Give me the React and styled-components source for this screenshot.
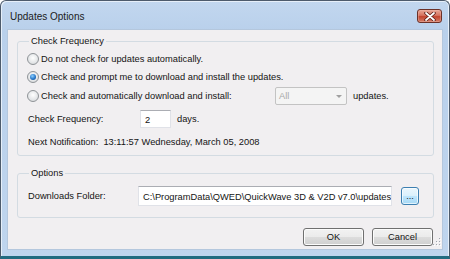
import React from "react";
import styled, { createGlobalStyle } from "styled-components";

const GlobalStyle = createGlobalStyle`
    body{
        margin:0;
        background:#fff;
        font-family:'Liberation Sans', Arial, sans-serif;
    }
`;

export default function App() {
    return (
        <>
            <GlobalStyle />
            <Janela>
                <BarraTitulo>
                    <Titulo>Updates Options</Titulo>
                    <BotaoFechar>
                        <svg width="12" height="9" viewBox="0 0 12 9">
                            <path d="M2 1 L10 8 M10 1 L2 8" stroke="#5a1c16" strokeWidth="3.4" strokeLinecap="round" />
                            <path d="M2 1 L10 8 M10 1 L2 8" stroke="#fff" strokeWidth="1.8" strokeLinecap="round" />
                        </svg>
                    </BotaoFechar>
                </BarraTitulo>
                <Conteudo>
                    <Grupo>
                        <Legenda>Check Frequency</Legenda>
                        <Linha $altura={18}>
                            <Radio />
                            <Texto>Do not check for updates automatically.</Texto>
                        </Linha>
                        <Linha $altura={18}>
                            <Radio $marcado />
                            <Texto>Check and prompt me to download and install the updates.</Texto>
                        </Linha>
                        <Linha $altura={20}>
                            <OpcaoLarga>
                                <Radio />
                                <Texto>Check and automatically download and install:</Texto>
                            </OpcaoLarga>
                            <Combo>
                                <span>All</span>
                                <Seta />
                            </Combo>
                            <Texto>updates.</Texto>
                        </Linha>
                        <Linha $altura={18} $topo={4} $recuo={1}>
                            <Rotulo $largura={112}>Check Frequency:</Rotulo>
                            <CampoTexto $largura={31} $altura={18}>2</CampoTexto>
                            <Texto>days.</Texto>
                        </Linha>
                        <Linha $altura={18} $topo={5} $recuo={1}>
                            <Texto>Next Notification:&nbsp; 13:11:57 Wednesday, March 05, 2008</Texto>
                        </Linha>
                    </Grupo>
                    <Grupo $topo={11} $baixo={11}>
                        <Legenda>Options</Legenda>
                        <Linha $altura={20} $topo={4} $recuo={1}>
                            <Rotulo $largura={110}>Downloads Folder:</Rotulo>
                            <CampoTexto $largura={254} $altura={20}>C:\ProgramData\QWED\QuickWave 3D &amp; V2D v7.0\updates</CampoTexto>
                            <BotaoProcurar>...</BotaoProcurar>
                        </Linha>
                    </Grupo>
                    <Rodape>
                        <Botao>OK</Botao>
                        <Botao>Cancel</Botao>
                    </Rodape>
                    <Alca>
                        <svg width="8" height="8" viewBox="0 0 8 8">
                            {[[6, 0], [3, 3], [6, 3], [0, 6], [3, 6], [6, 6]].map(([x, y]) => (
                                <g key={`${x}-${y}`}>
                                    <rect x={x + 1} y={y + 1} width="1" height="1" fill="#fff" />
                                    <rect x={x} y={y} width="1" height="1" fill="#a0a6ad" />
                                </g>
                            ))}
                        </svg>
                    </Alca>
                </Conteudo>
            </Janela>
        </>
    );
}

const Janela = styled.div`
    width:450px;
    height:259px;
    box-sizing:border-box;
    display:flex;
    flex-direction:column;
    padding:0 6px 6px 6px;
    border:1px solid #4d5b6c;
    border-bottom:3px solid #216b80;
    border-radius:6px 6px 0 0;
    background:linear-gradient(#c2d7ef, #b9d0eb 30px, #bfd5ee);
    box-shadow:inset 1px 1px 0 #e6eff9, inset -1px 0 0 #e6eff9;
`;

const BarraTitulo = styled.div`
    height:28px;
    display:flex;
    align-items:center;
    justify-content:space-between;
    padding-left:3px;
    padding-right:1px;
`;

const Titulo = styled.span`
    font-size:10px;
    color:#1b1b1b;
    margin-top:2px;
`;

const BotaoFechar = styled.div`
    width:25px;
    height:14px;
    box-sizing:border-box;
    margin-top:2px;
    border:1px solid #6b3128;
    border-radius:3px;
    background:linear-gradient(#e9a898, #d6735f 45%, #c2442e 55%, #d47e68);
    box-shadow:inset 0 0 0 1px #f0b9ad66;
    display:flex;
    align-items:center;
    justify-content:center;
`;

const Conteudo = styled.div`
    flex:1;
    position:relative;
    display:flex;
    flex-direction:column;
    background:#f1eff1;
    border:1px solid #b4c7dd;
    padding:5px 8px 0 9px;
    font-size:9.3px;
    color:#141414;
`;

const Grupo = styled.fieldset`
    margin:${p => p.$topo || 0}px 0 0 0;
    padding:3px 0 ${p => p.$baixo || 4}px 9px;
    border:1px solid #d3dbe2;
    border-radius:3px;
    min-width:0;
`;

const Legenda = styled.legend`
    padding:0 2px;
    margin-left:2px;
    font-size:9.3px;
    line-height:12px;
    color:#141414;
`;

const Linha = styled.div`
    height:${p => p.$altura}px;
    margin-top:${p => p.$topo || 0}px;
    padding-left:${p => p.$recuo || 0}px;
    display:flex;
    align-items:center;
`;

const OpcaoLarga = styled.div`
    width:248px;
    display:flex;
    align-items:center;
`;

const Radio = styled.span`
    width:12px;
    height:12px;
    box-sizing:border-box;
    border-radius:50%;
    border:1px solid #8f9397;
    background:radial-gradient(circle at 50% 40%, #ffffff, #e4e6e8 60%, #cfd2d5);
    display:flex;
    align-items:center;
    justify-content:center;
    margin-right:2px;
    flex-shrink:0;
    &::after{
        content:'';
        display:${p => (p.$marcado ? "block" : "none")};
        width:6px;
        height:6px;
        border-radius:50%;
        background:radial-gradient(circle at 40% 35%, #8fd0ff, #2677c9 55%, #0f3f7c);
    }
`;

const Texto = styled.span`
    white-space:nowrap;
    line-height:12px;
`;

const Rotulo = styled.span`
    width:${p => p.$largura}px;
    flex-shrink:0;
    white-space:nowrap;
`;

const Combo = styled.div`
    width:72px;
    height:18px;
    box-sizing:border-box;
    border:1px solid #c3c3c3;
    border-radius:2px;
    background:#f4f4f4;
    color:#a8a8a8;
    display:flex;
    align-items:center;
    justify-content:space-between;
    padding:0 4px 0 3px;
    margin-right:6px;
`;

const Seta = styled.span`
    width:0;
    height:0;
    border-left:3px solid transparent;
    border-right:3px solid transparent;
    border-top:3px solid #a0a0a0;
`;

const CampoTexto = styled.div`
    width:${p => p.$largura}px;
    height:${p => p.$altura}px;
    box-sizing:border-box;
    flex-shrink:0;
    border:1px solid #e0e2e8;
    border-top-color:#abadb3;
    background:#fff;
    padding:1px 4px 0 4px;
    display:flex;
    align-items:center;
    white-space:nowrap;
    overflow:hidden;
    margin-right:6px;
`;

const BotaoProcurar = styled.div`
    width:18px;
    height:18px;
    box-sizing:border-box;
    margin-left:3px;
    border:1px solid #3c7fb1;
    border-radius:3px;
    background:linear-gradient(#eaf6fd, #d9f0fc 50%, #bee6fd 50%, #a7d9f5);
    box-shadow:inset 0 0 0 1px #ffffffaa;
    display:flex;
    align-items:center;
    justify-content:center;
    font-size:9px;
    line-height:8px;
`;

const Rodape = styled.div`
    display:flex;
    justify-content:flex-end;
    gap:8px;
    margin-top:10px;
    padding-right:1px;
`;

const Botao = styled.div`
    width:61px;
    height:18px;
    box-sizing:border-box;
    border:1px solid #707070;
    border-radius:3px;
    background:linear-gradient(#f2f2f2, #ebebeb 50%, #dddddd 50%, #cfcfcf);
    box-shadow:inset 0 0 0 1px #fcfcfc;
    display:flex;
    align-items:center;
    justify-content:center;
`;

const Alca = styled.div`
    position:absolute;
    right:1px;
    bottom:3px;
    line-height:0;
`;
